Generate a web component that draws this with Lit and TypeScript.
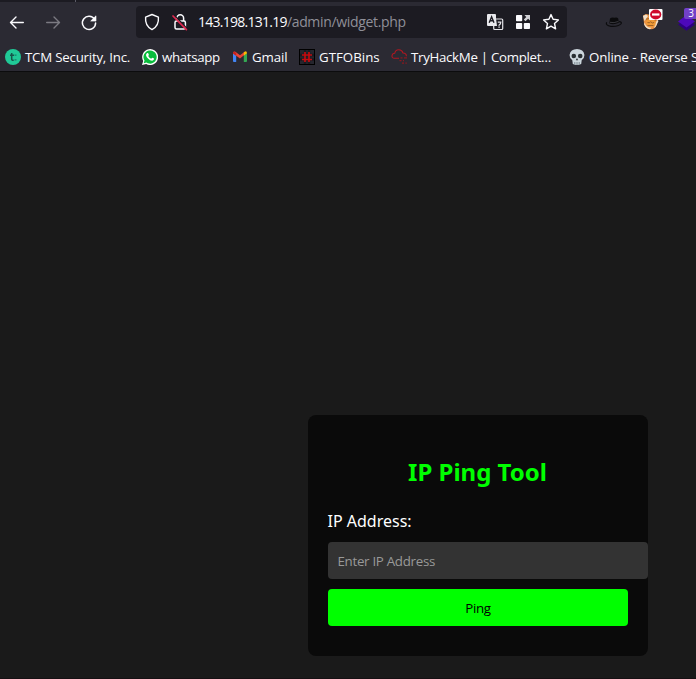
import { LitElement, html, css } from "lit";
import { customElement } from "lit/decorators.js";

const icons = {
  back: html`<svg width="20" height="20" viewBox="0 0 20 20" fill="none" stroke="#fbfbfe" stroke-width="1.4" stroke-linecap="round" stroke-linejoin="round"><path d="M16.3 10.5H3.5M9 5L3.5 10.5L9 16"/></svg>`,
  forward: html`<svg width="20" height="20" viewBox="0 0 20 20" fill="none" stroke="#7b7a82" stroke-width="1.4" stroke-linecap="round" stroke-linejoin="round"><path d="M3.7 10.5H16.5M11 5L16.5 10.5L11 16"/></svg>`,
  reload: html`<svg width="20" height="20" viewBox="0 0 20 20"><path d="M15.6 7.4A6.6 6.6 0 1 0 16.6 11" fill="none" stroke="#fbfbfe" stroke-width="1.5" stroke-linecap="round"/><path d="M17 3.8v5.3h-5.3z" fill="#fbfbfe" stroke="#fbfbfe" stroke-width=".6" stroke-linejoin="round"/></svg>`,
  shield: html`<svg width="16" height="18" viewBox="0 0 16 18" fill="none" stroke="#fbfbfe" stroke-width="1.4" stroke-linejoin="round"><path d="M8 1.5L14.4 4.1C14.9 9.5 12.7 14.2 8 16.6C3.3 14.2 1.1 9.5 1.6 4.1z"/></svg>`,
  lock: html`<svg width="16" height="18" viewBox="0 0 16 18" fill="none"><rect x="3" y="8" width="10.4" height="8" rx="1.5" stroke="#fbfbfe" stroke-width="1.5"/><path d="M4.8 8V5.1a3.4 3.4 0 0 1 6.8 0V8" stroke="#fbfbfe" stroke-width="1.5"/><path d="M2.6 2.6L15 15.4" stroke="#1c1b22" stroke-width="1.4"/><path d="M1 3L14.4 16.6" stroke="#e22850" stroke-width="1.7" stroke-linecap="round"/></svg>`,
  translate: html`<svg width="18" height="18" viewBox="0 0 18 18"><rect x="7.7" y="6" width="9" height="10.5" rx="1" fill="#1c1b22" stroke="#e4e4e8" stroke-width="1.2"/><path d="M2 1h7q1 0 1 1v3.5l1 7.5H2q-1 0-1-1V2q0-1 1-1z" fill="#e9e9ed"/><path d="M3.2 9.8L5.6 3.8L8 9.8M4 7.8h3.2" fill="none" stroke="#1c1b22" stroke-width="1.4"/><path d="M11.8 9.2h3c0 2-1.2 2.6-2.2 3.4M12.4 14.2h1.4" fill="none" stroke="#e4e4e8" stroke-width="1.2"/></svg>`,
  apps: html`<svg width="16" height="16" viewBox="0 0 16 16" fill="#fbfbfe"><rect x="1" y="1" width="6.2" height="6.2" rx=".8"/><rect x="1" y="8.9" width="6.2" height="6.2" rx=".8"/><rect x="8.8" y="8.9" width="6.2" height="6.2" rx=".8"/><path d="M9.4 1H15v5.6l-1.9-1.9L10.5 7.2L8.8 5.5L11.3 2.9z" fill="#d0d0d4"/></svg>`,
  star: html`<svg width="18" height="18" viewBox="0 0 18 18" fill="none" stroke="#fbfbfe" stroke-width="1.4" stroke-linejoin="round"><path d="M9 1.6L11.1 6.3L16.4 6.9L12.5 10.4L13.6 15.8L9 13.1L4.4 15.8L5.5 10.4L1.6 6.9L6.9 6.3z"/></svg>`,
  hat: html`<svg width="18" height="12" viewBox="0 0 18 12"><path d="M1.6 6.2Q.2 9.6 6 10.3Q13 10.8 16.2 7.6Q17 5.8 14 5.6" fill="none" stroke="#0c0c0e" stroke-width="1.2"/><path d="M4.3 7.6L5 2.4Q7 1 9.3 1.8Q12 .8 13.2 2.4L13.9 6.8Q9 9 4.3 7.6z" fill="#0b0b0d"/><path d="M5 6.3Q9 7.4 13.4 5.4" fill="none" stroke="#3c3c42" stroke-width=".9"/></svg>`,
  fox: html`<svg width="22" height="22" viewBox="0 0 22 22"><path d="M2 6.5L5 5l5 1 7 5.5-1.2 4.5Q13.500 20.500 10 20.300Q5 20 3.200 15.500z" fill="#e99243"/><path d="M2 7l3-1.500 2 1.500-3.500 5zM3.500 13.500Q5.500 19 10.500 18.800L9 20.300Q4.500 19.500 3.200 15.500zM16.500 11l1 1-3 6-1.500 1 2-6z" fill="#eee0cc"/><path d="M5.500 10.500L8 9l7 2-.8 6-4.200 1-4.500-2.500z" fill="#f09a36"/><path d="M5 10.200l3.500-.700 6.500 1.700M6.500 13.500l2 .3 1.200-1.200 1.500 1.500 2-.700M6.500 16.500h6" stroke="#8d5422" stroke-width=".8" fill="none"/><rect x="8" y="0" width="13.500" height="11" rx="1" fill="#fff"/><ellipse cx="14.700" cy="5.500" rx="5.600" ry="5" fill="#cf0a2c"/><rect x="11" y="4.400" width="7.400" height="2.200" fill="#fff"/></svg>`,
  layers: html`<svg width="18" height="18" viewBox="0 0 18 18"><path d="M0 11.5L8.500 17.800L17 11.500L8.500 6z" fill="#2d0080"/><path d="M0 8.500L8.500 14.500L17 8.500L8.500 2z" fill="#4d08bb"/></svg>`,
  tcm: html`<svg width="16" height="16" viewBox="0 0 16 16"><circle cx="8" cy="8" r="8" fill="#20c997"/><path d="M6.700 4v6q0 1.600 2 1.300M5 6.200h4" fill="none" stroke="#17554b" stroke-width="1.500"/><path d="M9.500 6.200h2M9.500 10.800h2" stroke="#17806a" stroke-width="1.300"/></svg>`,
  whatsapp: html`<svg width="16" height="16" viewBox="0 0 16 16"><path d="M0 16L1.200 12A8 8 0 1 1 4.200 15z" fill="#fff"/><path d="M1.700 14.300l.8-2.700A6.600 6.600 0 1 1 4.500 13.600z" fill="#08bd3c"/><path d="M5.200 4.100q.7-.4 1 .2l.7 1.500q0 .5-.7 1.100 1 2 3 2.800l.9-1q.4-.2 2 .8.1 1.500-1.400 2.100Q8.500 12 6 9.400 3.300 6.500 4.300 4.900z" fill="#fff"/></svg>`,
  gmail: html`<svg width="14" height="12" viewBox="0 0 14 12"><path d="M0 2v8.200q0 .8 1 .8h2.200V4.500z" fill="#4285f4"/><path d="M14 2v8.200q0 .8-1 .8h-2.200V4.500z" fill="#34a853"/><path d="M0 2Q.2-.3 2.400.7L7 4.300L11.600.7V3.800L7 7.600L3.200 4.700L0 2.400z" fill="#ea4335"/><path d="M10.800 1.300L12 .4Q14 .1 14 2.200L10.800 4.800z" fill="#fbbc04"/><path d="M0 2Q.1.7 1.200.5L3.200 2v2.800L0 2.400z" fill="#c5221f"/></svg>`,
  gtfo: html`<svg width="16" height="16" viewBox="0 0 16 16"><rect width="16" height="16" fill="#000"/><rect x="1" y="1" width="14" height="14" fill="#25252d"/><path d="M6 1v14M10 1v14M1 6h14M1 10.500h14" stroke="#19191f" stroke-width="2.400"/><path d="M6 3v10M10 3v10M3 6h10M3 10.500h10" stroke="#c40c10" stroke-width="1.700"/></svg>`,
  thm: html`<svg width="17" height="16" viewBox="0 0 17 16" fill="none" stroke="#b01721" stroke-width="1.100"><path d="M8 9.300H3.400Q.7 9 1 6.700T3.700 4.300Q4.500.7 7.800.8T12 4Q15.400 4 15.400 7.200"/><path d="M9.500 8.800h2M13 8.800h3M8.500 11.700h2M12 11.700h1M11 14.200h2M14.400 14.200h1.400" stroke="#8b1821" stroke-width="1.300"/></svg>`,
  skull: html`<svg width="16" height="16" viewBox="0 0 16 16"><path d="M8 0Q14.500.2 15.400 5.800Q15.600 9.500 12.700 11.200L12.200 15Q8 17 3.800 15L3.300 11.200Q.4 9.500.6 5.800Q1.500.2 8 0z" fill="#ccd6dd"/><circle cx="4.800" cy="7" r="2.300" fill="#292f33"/><circle cx="11.200" cy="7" r="2.300" fill="#292f33"/><path d="M8 9l-1.200 2.200h2.400z" fill="#292f33"/><path d="M5.800 13v2.500M8 13v3M10.200 13v2.500" stroke="#68747c" stroke-width=".8"/></svg>`,
};

const bookmarks = [
  { key: "tcm", icon: icons.tcm, text: "TCM Security, Inc." },
  { key: "wa", icon: icons.whatsapp, text: "whatsapp" },
  { key: "gm", icon: icons.gmail, text: "Gmail" },
  { key: "gtfo", icon: icons.gtfo, text: "GTFOBins" },
  { key: "thm", icon: icons.thm, text: "TryHackMe | Complet…" },
  { key: "rev", icon: icons.skull, text: "Online - Reverse S" },
];

@customElement("browser-chrome")
class BrowserChrome extends LitElement {
  static styles = css`
    :host { display: block; height: 72px; box-sizing: border-box; background: #2b2a33; border-bottom: 1px solid #0c0c0d; overflow: hidden; font: 14px/20px "Open Sans", sans-serif; color: #fbfbfe; }
    svg { display: block; flex: none; }
    .tabs { height: 2px; background: #1c1b22; padding-left: 75px; }
    .sep { width: 1px; height: 2px; background: #5b5b66; }
    .nav { height: 40px; display: flex; align-items: center; padding-left: 7px; }
    .buttons { display: flex; gap: 16px; width: 129px; }
    .url { box-sizing: border-box; width: 431px; height: 32px; border-radius: 4px; background: #1c1b22; display: flex; align-items: center; padding: 0 7px 0 8px; }
    .lock { margin: 0 10px 0 12px; }
    .address { flex: 1; white-space: nowrap; font-size: 14px; }
    .host { letter-spacing: -0.73px; }
    .path { color: #8f8f98; letter-spacing: -0.33px; }
    .actions { display: flex; align-items: center; gap: 11px; }
    .extensions { display: flex; align-items: center; flex: none; margin-left: 38px; }
    .fox { margin: -4px 0 0 18px; }
    .layers { position: relative; margin-left: 15px; }
    .count { position: absolute; left: 6px; top: -5px; width: 14px; height: 11px; border-radius: 2px; background: #7140c8; font-size: 10px; line-height: 11px; text-align: center; }
    .marks { height: 30px; display: flex; align-items: center; padding-left: 5px; }
    .mark { display: flex; align-items: center; flex: none; white-space: nowrap; font-size: 13.3px; gap: 4px; }
    .tcm { width: 137px; letter-spacing: -0.23px; }
    .wa { width: 91px; letter-spacing: -0.35px; }
    .gm { width: 66px; gap: 5px; letter-spacing: -0.1px; }
    .gtfo { width: 92px; }
    .thm { width: 178px; gap: 3px; letter-spacing: -0.31px; }
    .rev { letter-spacing: -0.15px; }
  `;
  render() {
    return html`
      <div class="tabs"><div class="sep"></div></div>
      <div class="nav">
        <div class="buttons">${icons.back}${icons.forward}${icons.reload}</div>
        <div class="url">${icons.shield}<span class="lock">${icons.lock}</span>
          <span class="address"><span class="host">143.198.131.19</span><span class="path">/admin/widget.php</span></span>
          <span class="actions">${icons.translate}${icons.apps}${icons.star}</span>
        </div>
        <div class="extensions">${icons.hat}<span class="fox">${icons.fox}</span><span class="layers">${icons.layers}<span class="count">3</span></span></div>
      </div>
      <div class="marks">${bookmarks.map((b) => html`<div class="mark ${b.key}">${b.icon}<span>${b.text}</span></div>`)}</div>
    `;
  }
}

@customElement("app-root")
class AppRoot extends LitElement {
  static styles = css`
    :host { display: flex; flex-direction: column; box-sizing: border-box; height: 679px; overflow: hidden; background: #1a1a1a; border-bottom: 1px solid #161013; color: #fff; font: 16px/22px "Noto Sans", sans-serif; }
    .page { flex: 1; display: flex; justify-content: flex-end; align-items: flex-end; padding: 0 48px 22px 0; }
    .card { box-sizing: border-box; width: 340px; height: 241px; padding: 20px; border-radius: 8px; background: #0a0a0a; }
    h2 { margin: 20px 0; font-size: 24px; line-height: 33px; color: #0f0; text-align: center; text-indent: -1px; }
    label { display: block; margin: 22px 0 10px; text-indent: -0.5px; }
    input, button { display: block; box-sizing: border-box; height: 37px; border: 0; border-radius: 4px; font: 13.33px "Open Sans", sans-serif; letter-spacing: -0.3px; }
    input { width: 320px; padding: 10px 9.5px; background: #333; color: #fff; }
    input::placeholder { color: #999; opacity: 1; }
    button { width: 300px; margin-top: 10px; background: #0f0; color: #000; }
  `;
  render() {
    return html`
      <browser-chrome></browser-chrome>
      <main class="page">
        <form class="card">
          <h2>IP Ping Tool</h2>
          <label for="ip">IP Address:</label>
          <input id="ip" placeholder="Enter IP Address" />
          <button type="button">Ping</button>
        </form>
      </main>
    `;
  }
}
